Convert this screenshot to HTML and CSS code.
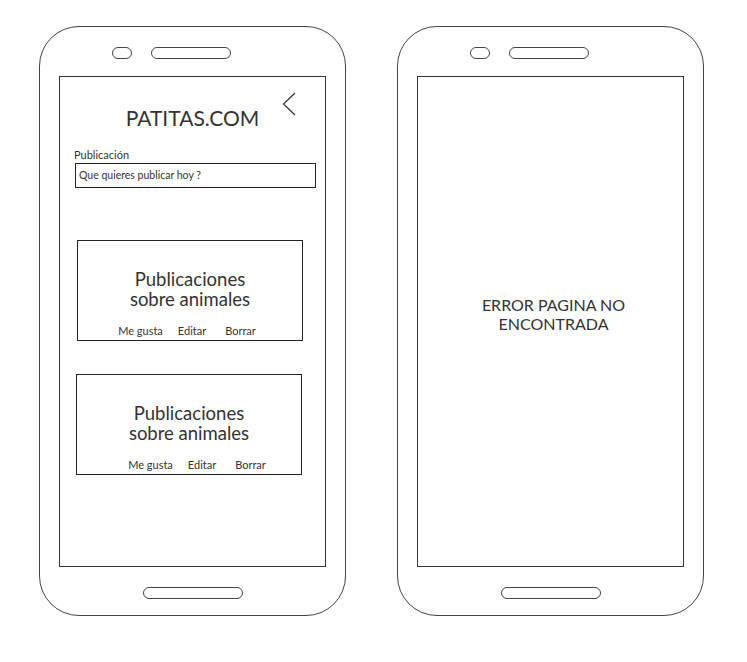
FILE: index.html
```html
<!DOCTYPE html>
<html lang="es">
<head>
  <meta charset="UTF-8">
  <title>PATITAS.COM | Wireframe</title>
  <link rel="stylesheet" href="styles.css">
</head>
<body>
  <div class="phones">

    <!-- TELEFONO 1: inicio -->
    <div class="phone">
      <div class="phone-top">
        <span class="pill pill-small"></span>
        <span class="pill pill-big"></span>
      </div>
      <div class="screen">
        <div class="header">
          <span></span>
          <h1 class="title">PATITAS.COM</h1>
          <svg class="back" width="14" height="24" viewBox="0 0 14 24">
            <path d="M13 1 L1.5 12 L13 23" fill="none" stroke="#333" stroke-width="1.2"/>
          </svg>
        </div>

        <div class="form">
          <label class="form-label">Publicación</label>
          <div class="input">Que quieres publicar hoy ?</div>
        </div>

        <div class="card">
          <div class="card-text">Publicaciones<br>sobre animales</div>
          <div class="card-actions">
            <span>Me gusta</span><span>Editar</span><span>Borrar</span>
          </div>
        </div>

        <div class="card card-alt">
          <div class="card-text">Publicaciones<br>sobre animales</div>
          <div class="card-actions">
            <span>Me gusta</span><span>Editar</span><span>Borrar</span>
          </div>
        </div>
      </div>
      <div class="phone-bottom">
        <span class="pill pill-home"></span>
      </div>
    </div>

    <!-- TELEFONO 2: error -->
    <div class="phone">
      <div class="phone-top">
        <span class="pill pill-small"></span>
        <span class="pill pill-big"></span>
      </div>
      <div class="screen screen-error">
        <p class="error-text">ERROR PAGINA NO<br>ENCONTRADA</p>
      </div>
      <div class="phone-bottom">
        <span class="pill pill-home"></span>
      </div>
    </div>

  </div>
</body>
</html>
```

FILE: styles.css
```css
/* GERAL */
body {
  margin: 0;
  background: #fff;
  font-family: Lato, "Noto Sans", sans-serif;
  color: #333;
}

.phones {
  display: flex;
  gap: 51px;
  padding: 26px 0 0 39px;
}

/* TELEFONO */
.phone {
  width: 307px;
  height: 590px;
  box-sizing: border-box;
  border: 1.5px solid #444;
  border-radius: 40px;
  display: flex;
  flex-direction: column;
}

.phone-top {
  height: 49px;
  display: flex;
  align-items: center;
  gap: 19px;
  padding: 3px 0 0 72px;
  box-sizing: border-box;
}

.phone-bottom {
  flex: 1;
  display: flex;
  align-items: center;
  justify-content: center;
  padding-top: 4px;
}

.pill {
  display: block;
  height: 10px;
  border: 1.5px solid #444;
  border-radius: 6px;
}

.pill-small { width: 18px; }
.pill-big { width: 78px; }
.pill-home { width: 98px; }

/* PANTALLA */
.screen {
  width: 267px;
  height: 491px;
  box-sizing: border-box;
  margin-left: 19px;
  border: 1px solid #333;
}

.header {
  display: grid;
  grid-template-columns: 1fr auto 1fr;
  align-items: start;
  padding-top: 15px;
}

.title {
  margin: 13px 0 0;
  font-size: 21px;
  line-height: 25px;
  font-weight: 400;
}

.back {
  justify-self: end;
  margin-right: 29px;
}

/* FORMULARIO */
.form {
  padding: 18px 9px 0 14px;
}

.form-label {
  display: block;
  font-size: 11px;
  margin-bottom: 2px;
}

.input {
  margin-left: 1px;
  height: 25px;
  box-sizing: border-box;
  border: 1.5px solid #222;
  font-size: 10.5px;
  padding: 5px 3px;
}

/* TARJETAS */
.card {
  width: 226px;
  height: 101px;
  box-sizing: border-box;
  border: 1px solid #222;
  margin: 52px 0 0 17px;
  display: flex;
  flex-direction: column;
  align-items: center;
  padding-top: 28px;
}

.card-alt {
  margin: 33px 0 0 16px;
}

.card-text {
  font-size: 18.5px;
  line-height: 20px;
  text-align: center;
}

.card-actions {
  display: flex;
  gap: 15px;
  font-size: 11px;
  margin-top: 15px;
  padding-right: 6px;
}

.card-alt .card-actions {
  padding: 0 0 0 16px;
}

.card-actions span + span + span {
  margin-left: 4px;
}

/* ERROR */
.screen-error {
  display: flex;
  align-items: center;
  justify-content: center;
}

.error-text {
  margin: 0 0 16px 6px;
  font-size: 16px;
  line-height: 19px;
  text-align: center;
}
```
